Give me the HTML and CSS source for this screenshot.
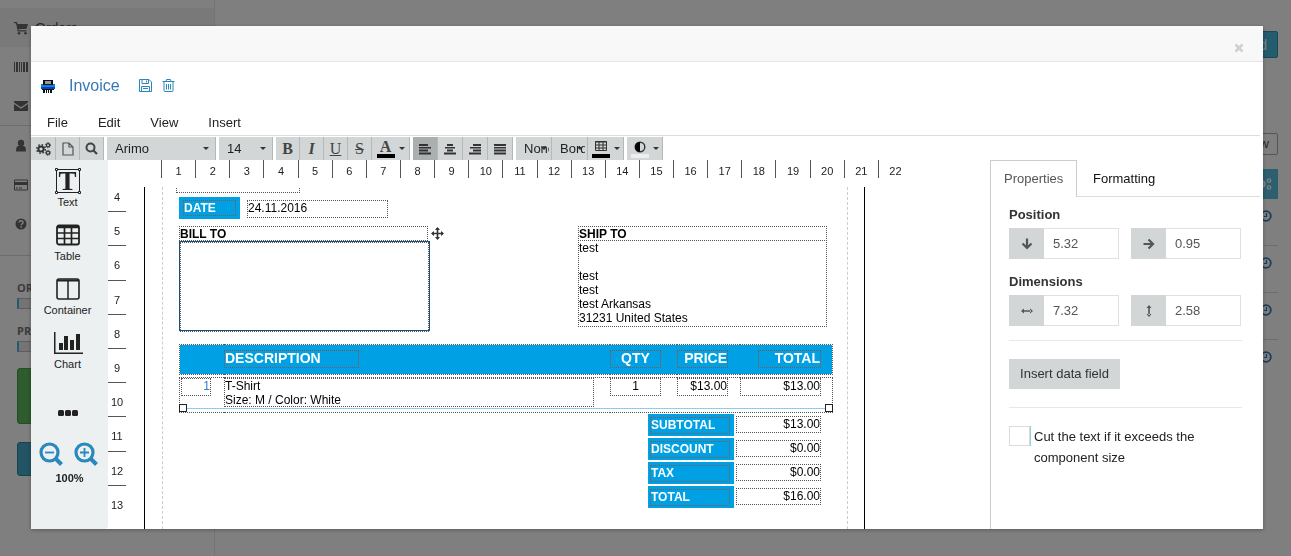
FILE: index.html
```html
<!DOCTYPE html>
<html lang="en">
<head>
<meta charset="utf-8">
<title>Invoice designer</title>
<link rel="stylesheet" href="styles.css">
</head>
<body>
<div class="app">
  <nav class="side">
    <a class="side-link active" href="#"><svg width="14" height="14" viewBox="0 0 14 14"><path d="M0 1h3l.5 2H14l-1.500 5H4.600l.3 1.200H12.500v1.300H3.800L2 2.300H0z"/><circle cx="5" cy="12.200" r="1.300"/><circle cx="11.500" cy="12.200" r="1.300"/></svg>Orders</a>
    <a class="side-link" href="#"><svg width="14" height="14" viewBox="0 0 14 14"><path d="M0 2h1v10H0zM2 2h2v10H2zM5 2h1v10H5zM7 2h1v10H7zM9 2h2v10H9zM12 2h2v10h-2z"/></svg></a>
    <a class="side-link" href="#"><svg width="14" height="14" viewBox="0 0 14 14"><path d="M0 3.500V2h14v1.500L7 8.200zM0 5l7 4.700L14 5v7H0z"/></svg></a>
    <hr class="side-rule">
    <a class="side-link" href="#"><svg width="14" height="14" viewBox="0 0 14 14"><circle cx="7" cy="4" r="3.200"/><path d="M2 12.500c0-4 1-5.500 2.500-5.500h5c1.500 0 2.500 1.500 2.500 5.500z"/></svg></a>
    <a class="side-link" href="#"><svg width="14" height="14" viewBox="0 0 14 14"><path d="M.5 2h13v10H.5z" fill="none" stroke="#666"/><path d="M0 4h14v3H0zM2 9.500h2v1H2zM5 9.500h3v1H5z"/></svg></a>
    <a class="side-link" href="#"><svg width="14" height="14" viewBox="0 0 14 14"><circle cx="7" cy="7" r="5.500"/><path d="M5 5.500c.2-2.400 4-2.200 4 0C9 7 7.200 6.800 7.200 8.200M7.200 9.300v1.500" fill="none" stroke="#fff" stroke-width="1.500"/></svg></a>
    <hr class="side-rule spaced">
    <p class="side-label">ORDERS</p><div class="meter"></div>
    <p class="side-label">PRODUCTS</p><div class="meter"></div>
    <button class="side-btn green" aria-label="Upgrade"></button>
    <button class="side-btn teal" aria-label="Support"></button>
  </nav>
  <main class="content">
    <button class="add">Add</button>
    <button class="view">View</button>
    <button class="cogs" aria-label="Settings"><svg width="14" height="14" viewBox="0 0 14 14" fill="none" stroke="#fff"><circle cx="4" cy="7" r="2.800" stroke-width="2"/><circle cx="11" cy="3.500" r="1.700" stroke-width="1.300"/><circle cx="11" cy="10.500" r="1.700" stroke-width="1.300"/></svg></button>
    <div class="hist"><svg class="clock"><use href="#clock"/></svg></div>
    <div class="hist"><svg class="clock"><use href="#clock"/></svg></div>
    <div class="hist"><svg class="clock"><use href="#clock"/></svg></div>
    <div class="hist last"><svg class="clock"><use href="#clock"/></svg></div>
  </main>
</div>

<svg class="defs" width="0" height="0">
  <symbol id="clock" viewBox="0 0 12 12"><circle cx="6" cy="6" r="4.800" fill="none" stroke="#337ab7" stroke-width="1.800"/><path d="M6.500 3v3.500H4" fill="none" stroke="#337ab7" stroke-width="1.200"/></symbol>
  <symbol id="caret" viewBox="0 0 6 4"><path d="M0 0h6L3 3z" fill="#333"/></symbol>
</svg>

<div class="overlay">
<section class="modal" role="dialog" aria-label="Invoice">
  <header class="modal-head"><button class="close" aria-label="Close"><svg width="10" height="10" viewBox="0 0 10 10"><path d="M1.500 1.500l7 7M8.500 1.500l-7 7" stroke="#d0d0d0" stroke-width="2.600"/></svg></button></header>

  <div class="title">
    <svg width="14" height="14" viewBox="0 0 14 14"><path d="M2 1h10v5H2z" fill="#111"/><path d="M4 2h6v3H4z" fill="#999"/><path d="M0 5h2v1h10V5h2v5H0z" fill="#0a84e8"/><path d="M0 8h14v2H0z" fill="#0645b8"/><path d="M1 10h12v1H1zM2 11h2v3H2zM5 11h1v3H5zM7 11h1v3H7zM9 11h2v3H9z" fill="#111"/></svg>
    <h1>Invoice</h1>
    <button class="plain" aria-label="Save"><svg width="13" height="13" viewBox="0 0 13 13" fill="none" stroke="#2a88bd"><path d="M.5.500h9.500l2.500 2.500v9.500H.5zM3 .5v4h6.500v-4M2.500 12.500v-5h8v5M7.500 1.500v2M4 9.500h5"/></svg></button>
    <button class="plain" aria-label="Delete"><svg width="13" height="13" viewBox="0 0 13 13" fill="none" stroke="#2a88bd"><path d="M.5 2.500h12M4 2.500l.5-2h4l.5 2M2 3v8.500q0 1 1 1h7q1 0 1-1V3M4.500 5v5.500M6.500 5v5.500M8.500 5v5.500"/></svg></button>
  </div>

  <nav class="menu"><button>File</button><button>Edit</button><button>View</button><button>Insert</button></nav>

  <div class="toolbar">
    <div class="group setup">
      <button aria-label="Settings"><svg width="15" height="14" viewBox="0 0 15 14" fill="none" stroke="#333"><circle cx="5" cy="7" r="2.600" stroke-width="2"/><circle cx="5" cy="7" r="4.300" stroke-width="1.400" stroke-dasharray="1.700 1.680"/><circle cx="12" cy="3.200" r="1.600" stroke-width="1.200"/><circle cx="12" cy="3.200" r="2.500" stroke-dasharray="1 .96"/><circle cx="12" cy="10.800" r="1.600" stroke-width="1.200"/><circle cx="12" cy="10.800" r="2.500" stroke-dasharray="1 .96"/></svg></button>
      <button aria-label="New page"><svg width="12" height="14" viewBox="0 0 12 14" fill="none" stroke="#555" stroke-width="1.200"><path d="M1 1h6l4 4v8H1zM7 1v4h4"/></svg></button>
      <button aria-label="Preview"><svg width="13" height="13" viewBox="0 0 13 13" fill="none" stroke="#444"><circle cx="5.500" cy="5.500" r="4" stroke-width="2"/><path d="M8.500 8.500l3.500 3.500" stroke-width="2.200"/></svg></button>
    </div>
    <span class="pick font"><select aria-label="Font"><option>Arimo</option></select><svg class="caret"><use href="#caret"/></svg></span>
    <span class="pick size"><select aria-label="Font size"><option>14</option></select><svg class="caret"><use href="#caret"/></svg></span>
    <div class="group letters">
      <button class="b">B</button><button class="i">I</button><button class="u">U</button><button class="s">S</button>
      <button class="color wide" aria-label="Text color"><span class="swatch"><b>A</b></span><svg class="caret"><use href="#caret"/></svg></button>
    </div>
    <div class="group align">
      <button class="on" aria-label="Align left"><svg width="14" height="12" viewBox="0 0 14 12"><path d="M1 1h9v2H1zM1 4h12v1.500H1zM1 6.500h9v2H1zM1 9.500h12v2H1z"/></svg></button>
      <button aria-label="Align center"><svg width="14" height="12" viewBox="0 0 14 12"><path d="M4 1h6v2H4zM2 4h10v1.500H2zM4 6.500h6v2H4zM1 9.500h12v2H1z"/></svg></button>
      <button aria-label="Align right"><svg width="14" height="12" viewBox="0 0 14 12"><path d="M5 1h8v2H5zM2 4h11v1.500H2zM5 6.500h8v2H5zM1 9.500h12v2H1z"/></svg></button>
      <button aria-label="Justify"><svg width="14" height="12" viewBox="0 0 14 12"><path d="M1 1h12v2H1zM1 4h12v1.500H1zM1 6.500h12v2H1zM1 9.500h12v2H1z"/></svg></button>
    </div>
    <div class="group">
      <span class="pick mini"><select aria-label="Border style"><option>None</option></select><svg class="caret"><use href="#caret"/></svg></span>
      <span class="pick mini"><select aria-label="Border side"><option>Border</option></select><svg class="caret"><use href="#caret"/></svg></span>
      <button class="wide" aria-label="Border color"><span class="swatch"><svg width="12" height="11" viewBox="0 0 12 11" fill="none" stroke="#333"><path d="M.5.500h11v9H.5zM0 1h12M0 4h12M0 7h12M4 1v9M8 1v9"/></svg></span><svg class="caret"><use href="#caret"/></svg></button>
    </div>
    <div class="group">
      <button class="wide" aria-label="Background color"><span class="swatch light"><svg width="12" height="12" viewBox="0 0 12 12"><circle cx="6" cy="6" r="4.800" fill="none" stroke="#333" stroke-width="1.400"/><path d="M6 1v10A5 5 0 0 1 6 1z"/></svg></span><svg class="caret"><use href="#caret"/></svg></button>
    </div>
  </div>

  <div class="work">
    <aside class="palette">
      <button class="tool"><span><svg width="28" height="28" viewBox="0 0 28 28" fill="none" stroke="#222"><path d="M2.500 2.500h23v23h-23z"/><path d="M1.500 1.500h2v2h-2zM24.500 1.500h2v2h-2zM1.500 24.500h2v2h-2zM24.500 24.500h2v2h-2z" fill="#fff"/></svg><b class="tee">T</b></span>Text</button>
      <button class="tool"><span><svg width="26" height="22" viewBox="0 0 26 22" fill="none" stroke="#222"><rect x="2" y="1.500" width="22" height="19" rx="2" stroke-width="1.800"/><path d="M2 3h22" stroke-width="2.500"/><path d="M2 9h22M2 14.500h22M9.500 3v17M16.500 3v17" stroke-width="1.700"/></svg></span>Table</button>
      <button class="tool"><span><svg width="26" height="22" viewBox="0 0 26 22" fill="none" stroke="#222"><rect x="2" y="1" width="22" height="20" rx="2" stroke-width="1.600"/><path d="M2 2.500h22" stroke-width="2"/><path d="M13 3v18" stroke-width="1.500"/></svg></span>Container</button>
      <button class="tool"><span><svg width="30" height="24" viewBox="0 0 30 24"><path d="M1 1h1.500v20.500H30V23H1z"/><path d="M6 12h4v7H6zM11 5h4v14h-4zM17 9h4v10h-4zM23 3h4v16h-4z"/></svg></span>Chart</button>
      <button class="more" aria-label="More"><svg width="22" height="6" viewBox="0 0 22 6"><rect x="1" width="6" height="6" rx="1.500"/><rect x="8" width="6" height="6" rx="1.500"/><rect x="15" width="6" height="6" rx="1.500"/></svg></button>
      <div class="zoom">
        <button class="plain" aria-label="Zoom out"><svg width="24" height="24" viewBox="0 0 24 24" fill="none" stroke="#2a88bd"><circle cx="10.500" cy="10.500" r="8.500" stroke-width="3.200"/><path d="M16.500 16.500l6 6" stroke-width="4"/><path d="M6 10.500h9" stroke-width="1.800"/></svg></button>
        <button class="plain" aria-label="Zoom in"><svg width="24" height="24" viewBox="0 0 24 24" fill="none" stroke="#2a88bd"><circle cx="10.500" cy="10.500" r="8.500" stroke-width="3.200"/><path d="M16.500 16.500l6 6" stroke-width="4"/><path d="M6 10.500h9M10.500 6v9" stroke-width="1.800"/></svg></button>
      </div>
      <strong class="percent">100%</strong>
    </aside>

    <div class="editor">
      <div class="ruler-x"><i>1</i><i>2</i><i>3</i><i>4</i><i>5</i><i>6</i><i>7</i><i>8</i><i>9</i><i>10</i><i>11</i><i>12</i><i>13</i><i>14</i><i>15</i><i>16</i><i>17</i><i>18</i><i>19</i><i>20</i><i>21</i><i>22</i></div>
      <div class="stage">
        <div class="ruler-y"><i>4</i><i>5</i><i>6</i><i>7</i><i>8</i><i>9</i><i>10</i><i>11</i><i>12</i><i>13</i></div>
        <div class="sheet">
          <div class="guides"></div>
          <div class="part box above"></div>
          <div class="part date-label"><div class="box brown">DATE</div></div>
          <div class="part box date">24.11.2016</div>
          <div class="part box bill-head">BILL TO</div>
          <svg class="part move" width="13" height="13" viewBox="0 0 13 13"><path d="M6.500 1v11M1 6.500h11" stroke="#333" stroke-width="1.600"/><path d="M6.500 0L9 3H4zM6.500 13L9 10H4zM0 6.500L3 4v5zM13 6.500L10 4v5z" fill="#333"/></svg>
          <div class="part bill-body"></div>
          <div class="part box ship-head">SHIP TO</div>
          <div class="part box ship-body">test<br><br>test<br>test<br>test Arkansas<br>31231 United States</div>

          <table class="part items">
            <colgroup><col class="c-num"><col class="c-desc"><col class="c-qty"><col class="c-price"><col class="c-total"></colgroup>
            <thead><tr><th></th><th><div class="box brown w-title">DESCRIPTION</div></th><th><div class="box brown w-short mid">QTY</div></th><th><div class="box brown w-short end">PRICE</div></th><th><div class="box brown w-sum end">TOTAL</div></th></tr></thead>
            <tbody><tr><td><div class="box w-num end">1</div></td><td><div class="box w-desc">T-Shirt<br>Size: M / Color: White</div></td><td><div class="box w-short mid">1</div></td><td><div class="box w-short end">$13.00</div></td><td><div class="box w-amount end">$13.00</div></td></tr></tbody>
          </table>
          <div class="part line"></div>
          <div class="part knob left"></div>
          <div class="part knob right"></div>

          <table class="part totals">
            <tr><th><div class="box brown">SUBTOTAL</div></th><td><div class="box end">$13.00</div></td></tr>
            <tr><th><div class="box brown">DISCOUNT</div></th><td><div class="box end">$0.00</div></td></tr>
            <tr><th><div class="box brown">TAX</div></th><td><div class="box end">$0.00</div></td></tr>
            <tr><th><div class="box brown">TOTAL</div></th><td><div class="box end">$16.00</div></td></tr>
          </table>
        </div>
      </div>
    </div>

    <aside class="props">
      <div class="tabs"><button class="tab current">Properties</button><button class="tab">Formatting</button></div>
      <div class="panel">
        <h2>Position</h2>
        <div class="pair">
          <label class="field"><span><svg width="12" height="12" viewBox="0 0 12 12" fill="none" stroke="#555" stroke-width="2.200"><path d="M6 .5v10M1.500 5.500L6 10l4.500-4.500"/></svg></span><input aria-label="Top" value="5.32"></label>
          <label class="field"><span><svg width="12" height="12" viewBox="0 0 12 12" fill="none" stroke="#555" stroke-width="2.200"><path d="M.5 6h10M5.500 1.500L10 6l-4.500 4.500"/></svg></span><input aria-label="Left" value="0.95"></label>
        </div>
        <h2>Dimensions</h2>
        <div class="pair">
          <label class="field"><span><svg width="14" height="12" viewBox="0 0 14 12" fill="#555"><path d="M3 5.200h8v1.600H3zM1 6l3-2.500v5zM13 6l-3-2.500v5z"/></svg></span><input aria-label="Width" value="7.32"></label>
          <label class="field"><span><svg width="12" height="14" viewBox="0 0 12 14" fill="#555"><path d="M5.200 3h1.600v8H5.200zM6 1l2.500 3h-5zM6 13l2.500-3h-5z"/></svg></span><input aria-label="Height" value="2.58"></label>
        </div>
        <hr>
        <button class="insert">Insert data field</button>
        <hr>
        <label class="check"><input type="checkbox"><span>Cut the text if it exceeds the component size</span></label>
      </div>
    </aside>
  </div>
</section>
</div>
</body>
</html>
```

FILE: styles.css
```css
* { box-sizing: border-box; }
body { margin: 0; background: #fff; color: #222; font: 13px/18px "Liberation Sans", Arial, sans-serif; }
button, input, select { font: inherit; color: inherit; }
button { padding: 0; border: 0; background: none; }
svg { display: block; flex: none; }
.defs { position: absolute; }
hr { margin: 0; border: 0; border-top: 1px solid #e8e8e8; }

/* Page behind the dialog */
.app { display: flex; height: 100vh; overflow: hidden; }
.side { flex: none; width: 215px; padding-top: 8px; border-right: 1px solid #e7e7e7; }
.side-link { display: flex; align-items: center; gap: 7px; height: 39px; padding-left: 14px; color: #555; font-size: 14px; text-decoration: none; }
.side-link svg { fill: #666; }
.side-link.active { background: #f2f2f2; }
.side-rule { border-color: #dadada; }
.side-rule.spaced { margin: 12px 0 23px; }
.side-label { margin: 0; padding-left: 17px; color: #777; font: bold 11px/18px "Open Sans", sans-serif; }
.meter { height: 11px; margin: 1px 16px 13px 17px; border: 1px solid #bbb; border-left: 2px solid #46b8da; background: #e8e8e8; }
.side-btn { display: block; width: 180px; margin-left: 17px; border-radius: 3px; }
.side-btn.green { height: 56px; margin-top: 16px; border: 1px solid #4a9a4a; background: #5cb85c; }
.side-btn.teal { height: 34px; margin-top: 18px; border: 1px solid #2a86a5; background: #46a9c8; }
.content { display: flex; flex: 1; flex-direction: column; align-items: flex-end; padding: 31px 13px 0 0; }
.add { width: 60px; height: 27px; padding-right: 10px; border: 1px solid #2a95b5; border-radius: 2px; background: #46b8da; color: #fff; font-size: 14px; text-align: right; }
.view { width: 80px; height: 22px; margin-top: 75px; padding-right: 8px; border: 1px solid #aaa; border-radius: 2px; color: #555; text-align: right; }
.cogs { display: flex; align-items: center; justify-content: flex-end; width: 44px; height: 30px; margin-top: 14px; padding-right: 6px; background: #5bc0de; }
.hist { display: flex; align-items: center; justify-content: flex-end; align-self: stretch; height: 47px; padding: 0 6px 13px 0; border-bottom: 1px solid #dadada; }
.hist.last { border: 0; }
.clock { width: 12px; height: 12px; }

/* Dialog */
.overlay { position: fixed; inset: 0; display: flex; padding: 26px 28px 27px 31px; background: rgba(0, 0, 0, .5); }
.modal { display: flex; flex: 1; flex-direction: column; min-width: 0; overflow: hidden; background: #fff; box-shadow: 0 1px 4px rgba(0, 0, 0, .3); }
.modal-head { display: flex; align-items: center; justify-content: flex-end; flex: none; height: 36px; padding: 8px 19px 0 0; border-bottom: 1px solid #e5e5e5; background: #f8f8f8; }
.title { display: flex; align-items: center; flex: none; height: 48px; padding-left: 10px; }
.title h1 { margin: 0 19px 0 14px; color: #337ab7; font-size: 16px; font-weight: normal; }
.title .plain { margin-right: 10px; padding-bottom: 2px; }
.menu { display: flex; flex: none; gap: 30px; height: 26px; margin-right: 3px; padding: 0 16px; border-bottom: 1px solid #ddd; }

.toolbar { display: flex; flex: none; gap: 3px; padding-top: 1px; }
.group { display: flex; height: 23px; background: #d2d6d6; }
.group > button { display: flex; align-items: center; justify-content: center; width: 24px; border-right: 1px solid #b4b8b8; }
.group > button svg { fill-rule: evenodd; }
.setup { padding-left: 1px; }
.align > button { width: 25px; }
.align svg { fill: #333; }
.group > .wide { gap: 4px; width: 36px; }
.letters > .wide { width: 38px; }
.group > .on { background: #aaafb0; }
.pick { display: flex; align-items: center; height: 23px; border-right: 1px solid #b4b8b8; background: #d2d6d6; }
.pick select { flex: 1; min-width: 0; height: 23px; padding: 0 0 0 8px; border: 0; border-radius: 0; appearance: none; background: none; }
.pick .caret { margin-right: 6px; }
.caret { width: 6px; height: 4px; }
.font { width: 109px; }
.size { width: 54px; }
.mini { width: 36px; }
.mini .caret { margin: 0 4px 0 -8px; }
.letters { color: #444; font: 16px/20px "Liberation Serif", serif; }
.b { font-weight: bold; }
.i { font-style: italic; font-weight: bold; }
.u { text-decoration: underline; }
.s { text-decoration: line-through; }
.swatch { display: flex; align-items: center; justify-content: center; width: 18px; height: 18px; border-bottom: 4px solid #000; }
.swatch.light { border-color: #eee; }

.work { display: flex; flex: 1; min-height: 0; }
.palette { display: flex; flex: none; flex-direction: column; width: 77px; padding-top: 7px; border-radius: 0 0 4px 0; background: #ecf0f1; font-size: 11px; line-height: 14px; }
.palette svg { fill: #222; }
.palette svg[fill="none"] { fill: none; }
.tool { display: flex; flex-direction: column; align-items: center; height: 54px; width: 73px; }
.tool > span { position: relative; display: grid; place-items: center; height: 28px; }
.tee { position: absolute; font: bold 27px/28px "Liberation Serif", serif; }
.more { display: grid; place-items: center; width: 73px; height: 59px; }
.zoom { display: flex; gap: 11px; padding-left: 8px; }
.percent { margin-top: 5px; text-align: center; }

/* Design canvas */
.editor { display: flex; flex: 1; flex-direction: column; min-width: 0; font-size: 11px; line-height: 14px; }
.editor i { font-style: normal; text-align: center; }
.ruler-x { display: grid; flex: none; grid-template-columns: repeat(22, 1fr); width: 751px; height: 18px; margin: 0 0 9px 53px; }
.ruler-x i { padding-top: 4px; border-left: 1px solid #555; }
.stage { display: flex; flex: 1; min-height: 0; overflow: hidden; }
.ruler-y { display: grid; flex: none; grid-template-rows: repeat(10, 1fr); width: 18px; height: 342px; margin-top: -9px; }
.ruler-y i { padding-top: 12px; border-bottom: 1px solid #555; }
.ruler-y i:last-child { border: 0; }
.sheet { position: relative; flex: none; width: 721px; margin-left: 18px; overflow: hidden; border: solid #000; border-width: 0 1px; color: #000; font-size: 12px; line-height: 14px; }
.guides { height: 100%; margin: 0 16px 0 17px; border: dashed #ccc; border-width: 0 1px; }
.part { position: absolute; }
.box { border: 1px dotted #555; }
.brown { border-color: #8f5540; }
.mid { text-align: center; }
.end { margin-left: auto; text-align: right; }
.above { left: 31px; top: -12px; width: 124px; height: 18px; }
.date-label { left: 34px; top: 10px; width: 61px; height: 22px; padding: 3px 4px; background: #00a1e4; color: #fff; font-weight: bold; }
.date { left: 102px; top: 13px; width: 141px; height: 18px; }
.bill-head, .ship-head { top: 39px; width: 249px; height: 15px; font-weight: bold; }
.bill-head { left: 34px; }
.move { left: 286px; top: 40px; }
.bill-body { left: 34px; top: 54px; width: 251px; height: 90px; border: 1px solid #1f5078; }
.bill-body::before { content: ""; display: block; height: 100%; border: 1px dotted #555; }
.ship-head, .ship-body { left: 433px; }
.ship-body { top: 53px; width: 249px; height: 87px; }

.items { left: 34px; top: 155px; width: 654px; table-layout: fixed; border-collapse: separate; border-spacing: 0 2px; }
.items th, .items td, .totals th, .totals td { padding: 0; text-align: left; vertical-align: top; }
.c-num { width: 45px; }
.c-desc { width: 386px; }
.c-qty { width: 67px; }
.c-price { width: 63px; }
.items .box { height: 18px; }
.items th { height: 31px; padding-top: 5px; border: dotted #555; border-width: 1px 0; background: #00a1e4; background-clip: padding-box; color: #fff; font-size: 14px; }
.items td { height: 36px; border: dotted #555; border-width: 1px 0; }
.items tr > :first-child { border-left-width: 1px; }
.items tr > :last-child { padding-right: 11px; border-right-width: 1px; }
.items .w-short { width: 51px; margin-left: 0; }
.w-title { width: 135px; }
.w-sum { width: 63px; }
.items .w-num { width: 30px; margin-left: 1px; color: #2a7fd0; }
.items .w-desc { width: 370px; height: 29px; }
.w-amount { width: 81px; }
.line { left: 38px; top: 221px; width: 646px; height: 1px; background: #8fcdf0; }
.knob { top: 217px; width: 8px; height: 8px; border: 1px solid #222; background: #fff; }
.knob.left { left: 34px; }
.knob.right { left: 680px; }
.totals { left: 503px; top: 227px; border-spacing: 0; }
.totals tr { height: 24px; }
.totals th { width: 88px; padding: 3px 4px 2px 2px; border: solid #fff; border-width: 0 2px 2px 0; background: #00a1e4; color: #fff; }
.totals td { width: 85px; padding-top: 2px; }
.totals .box { height: 17px; }

/* Properties */
.props { flex: none; width: 273px; border-left: 1px solid #ccc; }
.tabs { display: flex; height: 37px; margin-right: 3px; border-bottom: 1px solid #ddd; }
.tab { height: 37px; padding: 0 16px; color: #111; }
.tab.current { width: 86px; padding: 0 0 0 13px; border: solid #ccc; border-width: 1px 1px 0 0; background: #fff; color: #555; text-align: left; }
.panel { padding: 9px 21px 0 18px; color: #333; }
.panel h2 { margin: 0 0 4px; font-size: 13px; line-height: 18px; }
.pair { display: grid; grid-template-columns: repeat(2, minmax(0, 1fr)); gap: 12px; margin-bottom: 14px; padding-right: 1px; }
.field { display: flex; height: 31px; }
.field span { display: grid; flex: none; place-items: center; width: 35px; background: #d2d6d6; }
.field input { flex: 1; min-width: 0; padding: 0 9px; border: 1px solid #e0e0e0; border-left: 0; color: #555; }
.insert { display: block; width: 111px; height: 30px; margin: 18px 0; background: #d2d6d6; }
.check { display: flex; gap: 4px; padding-top: 18px; line-height: 21px; color: #222; }
.check input { flex: none; width: 21px; height: 20px; margin: 0; appearance: none; border: 1px solid #ddddd5; box-shadow: 1px 0 #8fcfe6; }
```
